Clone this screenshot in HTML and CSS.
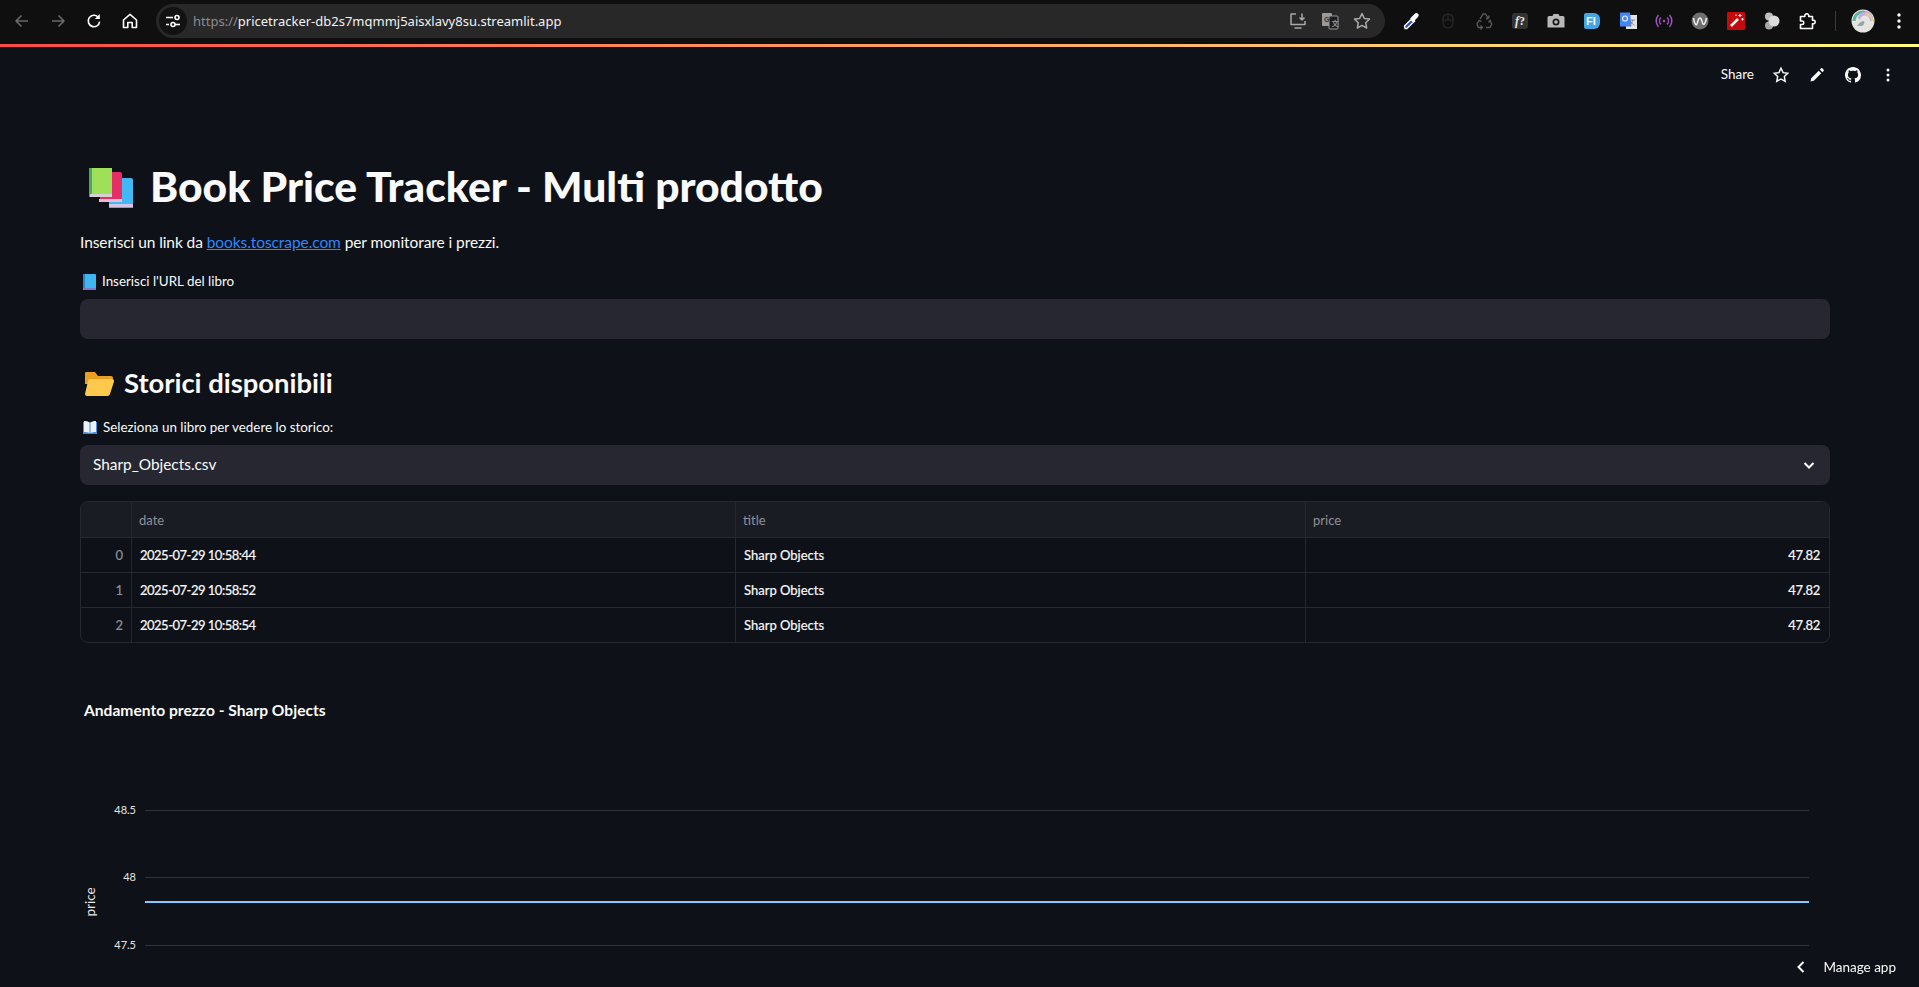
FILE: index.html
```html
<!DOCTYPE html>
<html lang="en">
<head>
    <meta charset="UTF-8">
    <meta name="viewport" content="width=device-width, initial-scale=1.0">
    <title>Book Price Tracker</title>
    <link rel="stylesheet" href="styles.css">
</head>
<body>

    <!-- browser chrome -->
    <div class="browser-bar">
        <div class="tb-slot"><svg width="20" height="20" viewBox="0 0 20 20" class="ic-dim"><path d="M16 10H4.500M9.500 4.500 4 10l5.500 5.500"/></svg></div>
        <div class="tb-slot"><svg width="20" height="20" viewBox="0 0 20 20" class="ic-dim"><path d="M4 10h11.500M10.500 4.500 16 10l-5.500 5.500"/></svg></div>
        <div class="tb-slot"><svg width="20" height="20" viewBox="0 0 20 20" class="ic-white"><path d="M15.600 10.600A5.700 5.700 0 1 1 14 6"/><path class="fill" d="M15.800 3v5h-5z"/></svg></div>
        <div class="tb-slot"><svg width="20" height="20" viewBox="0 0 20 20" class="ic-white"><path d="M3.500 9 10 3.300 16.500 9v7.500h-4.300v-5H7.800v5H3.500z"/></svg></div>

        <div class="omnibox">
            <div class="site-info">
                <svg width="16" height="16" viewBox="0 0 16 16" class="ic-white"><path d="M1 4.500h7M1 11.500h3"/><circle cx="12" cy="4.500" r="2"/><circle cx="8" cy="11.500" r="2"/><path d="M10 11.500h5"/></svg>
            </div>
            <div class="url"><span class="url-scheme">https://</span>pricetracker-db2s7mqmmj5aisxlavy8su.streamlit.app</div>
            <div class="omni-icons">
                <div class="omni-slot"><svg width="20" height="20" viewBox="0 0 20 20" class="ic-grey"><path d="M8 3H3v10.500h14V10M6.500 17h7M14 2.500v6.500M11.500 6.500 14 9l2.500-2.500"/></svg></div>
                <div class="omni-slot"><svg width="20" height="20" viewBox="0 0 20 20"><rect x="2" y="2" width="10" height="13" rx="1" fill="#9a9a9a"/><rect x="9" y="5" width="9" height="13" rx="1" fill="#1d1d1d" stroke="#9a9a9a"/><text x="4" y="11" class="mini-text dark">G</text><text x="11.500" y="15" class="mini-text grey">文</text></svg></div>
                <div class="omni-slot"><svg width="20" height="20" viewBox="0 0 20 20" class="ic-grey"><path d="m10 2.500 2.300 4.900 5.200.7-3.800 3.600 1 5.300-4.700-2.600L5.300 17l1-5.300L2.500 8.100l5.200-.7z"/></svg></div>
            </div>
        </div>

        <div class="toolbar">
            <div class="tb-slot"><svg width="20" height="20" viewBox="0 0 20 20"><path d="M3 17.500 2.500 15 9 8.500l2.500 2.500L5 17.500z" fill="#2a4fc0" stroke="#fff" stroke-width="1.300"/><path d="m9.500 6 3-3c1-1.200 2.500-1.200 3.500-.2s1 2.400-.2 3.400l-3 3 .7 1-1.300 1.300-4-4L9.500 6z" fill="#fff"/></svg></div>
            <div class="tb-slot"><svg width="20" height="20" viewBox="0 0 20 20" class="ic-faint"><rect x="5" y="3" width="10" height="14" rx="5"/><path d="M5 9h10M10 3v6"/></svg></div>
            <div class="tb-slot"><svg width="20" height="20" viewBox="0 0 20 20" class="ic-recycle"><path d="M6 8 9 3h2.500l2.500 4M12 8l2.500-1 .7-2.500M2.800 13 5 9.500l2.500.8M2.800 13l1.500 3.500H8M6.500 14.500l2 2-2 2M12 16.500h4l1.800-3.500-2-3.500M17 9l-1.500.8-.8 1.700"/></svg></div>
            <div class="tb-slot"><div class="ext-f"><em>f</em>?</div></div>
            <div class="tb-slot"><svg width="20" height="20" viewBox="0 0 20 20"><path d="M3 5h3.500l1-2h5l1 2H17a1.500 1.500 0 0 1 1.500 1.500v10H1.500V6.500A1.500 1.500 0 0 1 3 5z" fill="#b8b8b8"/><circle cx="10" cy="11" r="3.500" fill="#1a1a1a"/><circle cx="10" cy="11" r="1.800" fill="#b8b8b8"/></svg></div>
            <div class="tb-slot"><div class="ext-fi">F<span>I</span></div></div>
            <div class="tb-slot"><svg width="20" height="20" viewBox="0 0 20 20"><rect x="8" y="4" width="11" height="14" fill="#e3e3e3"/><path d="M2 1.500h10l1.500 14H2z" fill="#4285f4"/><circle cx="7" cy="7.500" r="2.500" fill="none" stroke="#e8f0fe" stroke-width="1.200"/><path d="M12 9h5M14.500 9c0 2-1 4-2.500 5M13 10.500c.8 2 2 3 3.500 3.500" fill="none" stroke="#8a8a8a"/></svg></div>
            <div class="tb-slot"><svg width="20" height="20" viewBox="0 0 20 20" class="ic-purple"><circle class="fill" cx="10" cy="10" r="1.300"/><path d="M7 6.500a5 5 0 0 0 0 7M13 6.500a5 5 0 0 1 0 7M4.500 4a9 9 0 0 0 0 12M15.500 4a9 9 0 0 1 0 12"/></svg></div>
            <div class="tb-slot"><svg width="20" height="20" viewBox="0 0 20 20"><circle cx="10" cy="10" r="8.500" fill="#6f6f6f"/><path d="M3.500 7c1 6 2.500 8 3.500 6s1-6 3-6 2 5 3 6 2.500-1 3.500-6" fill="none" stroke="#eee" stroke-width="1.500"/></svg></div>
            <div class="tb-slot"><svg width="20" height="20" viewBox="0 0 20 20"><rect x="1" y="1" width="18" height="18" rx="1" fill="#c30b0b"/><path d="m5 15 7-7" stroke="#fff" stroke-width="2.500"/><path d="M14 3v3M12.500 4.500h3M16.500 7v2.500M15.300 8.200h2.400M10 3.500v1.500" stroke="#fff"/></svg></div>
            <div class="tb-slot"><svg width="20" height="20" viewBox="0 0 20 20"><circle cx="7" cy="5.500" r="4" fill="#bdbdbd"/><circle cx="7" cy="14.500" r="4" fill="#a8a8a8"/><circle cx="12" cy="10" r="5.500" fill="#dcdcdc"/></svg></div>
            <div class="tb-slot"><svg width="20" height="20" viewBox="0 0 20 20" class="ic-white"><path d="M2.500 5.500h4.300c-.5-3.600 4.500-3.600 4 0h3.700v3.700c3.600-.5 3.600 4 0 3.500v4.800H2.500v-4h1.800c2 0 2-3.500 0-3.500H2.500z"/></svg></div>
            <div class="tb-sep"></div>
            <div class="tb-slot"><svg width="24" height="24" viewBox="0 0 24 24"><circle cx="12" cy="12" r="11.500" fill="#e4e4e0"/><path d="M1.500 12a10.500 10.500 0 0 1 21 0h-3a7.500 7.500 0 0 0-15 0z" fill="#56b8a0"/><path d="M7 9a7 7 0 0 1 15 2l-3 1a5 5 0 0 0-10-1z" fill="#c8a8e0"/><path d="M14 4a8 8 0 0 1 8.500 8l-2 0a7 7 0 0 0-6-6z" fill="#e8d08a"/><path d="M6 17c2-3 4-5 7-5 1 2 0 4-2 5z" fill="#9aa4ad"/></svg></div>
            <div class="tb-slot"><svg width="20" height="20" viewBox="0 0 20 20"><circle cx="10" cy="4" r="1.700" fill="#fff"/><circle cx="10" cy="10" r="1.700" fill="#fff"/><circle cx="10" cy="16" r="1.700" fill="#fff"/></svg></div>
        </div>
    </div>
    <div class="decoration"></div>

    <!-- streamlit toolbar -->
    <div class="app-bar">
        <span class="share">Share</span>
        <div class="app-slot"><svg width="18" height="18" viewBox="0 0 20 20" class="ic-white"><path d="m10 2.500 2.300 4.900 5.200.7-3.800 3.600 1 5.300-4.700-2.600L5.300 17l1-5.300L2.500 8.100l5.200-.7z"/></svg></div>
        <div class="app-slot"><svg width="16" height="16" viewBox="0 0 16 16"><path d="M1.500 14.500l.7-3.300 7.500-7.500 2.600 2.600-7.500 7.500zM10.800 2.600l1.200-1.200c.4-.4 1-.4 1.400 0l1.200 1.200c.4.400.4 1 0 1.400l-1.200 1.200z" fill="#fafafa"/></svg></div>
        <div class="app-slot"><svg width="16" height="16" viewBox="0 0 16 16"><path fill="#fafafa" d="M8 0C3.580 0 0 3.580 0 8c0 3.540 2.290 6.530 5.470 7.590.4.070.55-.17.55-.38 0-.19-.01-.82-.01-1.490-2.010.37-2.530-.49-2.690-.94-.09-.23-.48-.94-.82-1.130-.28-.15-.68-.52-.01-.53.63-.01 1.080.58 1.230.82.72 1.210 1.870.87 2.330.66.07-.52.28-.87.51-1.070-1.780-.2-3.640-.89-3.640-3.950 0-.87.31-1.590.82-2.150-.08-.2-.36-1.020.08-2.120 0 0 .67-.21 2.200.82.64-.18 1.320-.27 2-.27.68 0 1.360.09 2 .27 1.530-1.040 2.200-.82 2.200-.82.44 1.100.16 1.920.08 2.120.51.56.82 1.270.82 2.150 0 3.070-1.870 3.750-3.650 3.950.29.25.54.73.54 1.480 0 1.070-.01 1.930-.01 2.200 0 .21.15.46.55.38A8.013 8.013 0 0016 8c0-4.420-3.580-8-8-8z"/></svg></div>
        <div class="app-slot app-slot-last"><svg width="16" height="16" viewBox="0 0 16 16"><circle cx="8" cy="3" r="1.500" fill="#fafafa"/><circle cx="8" cy="8" r="1.500" fill="#fafafa"/><circle cx="8" cy="13" r="1.500" fill="#fafafa"/></svg></div>
    </div>

    <div class="main">
        <h1 class="page-title">
            <svg class="emoji-books" width="44" height="40" viewBox="0 0 44 40">
                <path d="M20 10h22a2 2 0 0 1 2 2v28H20z" fill="#42b8f5"/><rect x="20" y="36" width="24" height="3" fill="#d3c4e8"/>
                <path d="M11 4h20a2 2 0 0 1 2 2v28H11z" fill="#e52e66"/><rect x="10" y="31" width="23" height="3" fill="#e8bfd0"/>
                <path d="M2 0h21v27H0V2a2 2 0 0 1 2-2z" fill="#9fe05a"/><rect x="0" y="0" width="3" height="29" fill="#4fa858"/><rect x="1" y="26" width="22" height="3" fill="#d6d0d8"/>
            </svg>
            <span class="lift">Book Price Tracker - Multi prodotto</span>
        </h1>
        <p class="intro">Inserisci un link da <a href="#">books.toscrape.com</a> per monitorare i prezzi.</p>

        <label class="field-label">
            <svg class="emoji-small" width="13" height="16" viewBox="0 0 13 16"><path d="M1 0h11a1 1 0 0 1 1 1v15H0V1a1 1 0 0 1 1-1z" fill="#3fb6f0"/><rect y="0" width="2" height="16" fill="#2a82c8"/><rect y="14" width="13" height="2" fill="#7a78c8"/></svg>
            <span class="lift-small">Inserisci l'URL del libro</span>
        </label>
        <div class="text-input"></div>

        <h2 class="section-title">
            <svg class="emoji-folder" width="29" height="24" viewBox="0 0 29 24"><path d="M1 0h9l3 4h13a2 2 0 0 1 2 2v6H0V1a1 1 0 0 1 1-1z" fill="#e8a020"/><path d="M5 7h22a2 2 0 0 1 2 2.500L25 22a3 3 0 0 1-3 2H2a2 2 0 0 1-2-2l3-13a2 2 0 0 1 2-2z" fill="#ffc94d"/></svg>
            <span class="lift">Storici disponibili</span>
        </h2>

        <label class="field-label field-label-tight">
            <svg class="emoji-small" width="14" height="14" viewBox="0 0 14 14"><path d="M0 1h6.500l.5 1 .5-1H14v12H0z" fill="#3f8fe0"/><path d="M1 0c2 0 4 .2 5.500 1.500V12C5 11 3 11 1 11zM13 0c-2 0-4 .2-5.500 1.500V12C9 11 11 11 13 11z" fill="#eef1f6"/></svg>
            <span class="lift-small">Seleziona un libro per vedere lo storico:</span>
        </label>
        <div class="select-box">
            <span class="lift-small">Sharp_Objects.csv</span>
            <svg width="16" height="16" viewBox="0 0 16 16" class="chevron"><path d="M3.500 6 8 10.500 12.500 6"/></svg>
        </div>

        <div class="table-wrap">
            <table class="data-table">
                <colgroup>
                    <col class="col-index">
                    <col class="col-date">
                    <col class="col-title">
                    <col>
                </colgroup>
                <thead>
                    <tr><th></th><th>date</th><th>title</th><th>price</th></tr>
                </thead>
                <tbody>
                    <tr><td class="idx">0</td><td class="tight">2025-07-29 10:58:44</td><td>Sharp Objects</td><td class="num">47.82</td></tr>
                    <tr><td class="idx">1</td><td class="tight">2025-07-29 10:58:52</td><td>Sharp Objects</td><td class="num">47.82</td></tr>
                    <tr><td class="idx">2</td><td class="tight">2025-07-29 10:58:54</td><td>Sharp Objects</td><td class="num">47.82</td></tr>
                </tbody>
            </table>
        </div>

        <svg class="chart" width="1750" height="344" viewBox="0 0 1750 344">
            <text x="4" y="73" class="chart-title">Andamento prezzo - Sharp Objects</text>
            <line x1="65" x2="1729" y1="167.500" y2="167.500" class="grid"/>
            <line x1="65" x2="1729" y1="234.500" y2="234.500" class="grid"/>
            <line x1="65" x2="1729" y1="302.500" y2="302.500" class="grid"/>
            <text x="56" y="171" class="tick">48.5</text>
            <text x="56" y="238" class="tick">48</text>
            <text x="56" y="306" class="tick">47.5</text>
            <text class="axis-title" transform="translate(14.500 259) rotate(-90)">price</text>
            <line x1="65" x2="1729" y1="259" y2="259" class="series"/>
        </svg>
    </div>

    <div class="manage-app">
        <svg width="14" height="14" viewBox="0 0 14 14" class="chevron"><path d="M9.500 2 4.500 7l5 5"/></svg>
        <span>Manage app</span>
    </div>

</body>
</html>
```

FILE: styles.css
```css
* {
    margin: 0;
    padding: 0;
    box-sizing: border-box;
}

html, body {
    height: 100%;
    overflow: hidden;
}

body {
    font-family: 'Lato', 'Noto Sans', sans-serif;
    background-color: #0e1117;
    color: #fafafa;
}

/* Lato sits a little lower than the page's real font */
.lift {
    margin-bottom: 4px;
}

.lift-small {
    margin-bottom: 2px;
}

/* browser chrome */
.browser-bar {
    height: 44px;
    background-color: #0f0f0f;
    display: flex;
    align-items: center;
    padding: 0 0 2px 4px;
}

.tb-slot {
    width: 36px;
    height: 36px;
    flex: none;
    display: flex;
    align-items: center;
    justify-content: center;
}

.browser-bar svg path, .browser-bar svg circle, .browser-bar svg rect {
    stroke-linejoin: round;
}

.ic-dim path {
    fill: none;
    stroke: #6a6a6a;
    stroke-width: 1.6;
}

.ic-white path, .ic-white circle {
    fill: none;
    stroke: #fff;
    stroke-width: 1.6;
}

.ic-white .fill {
    fill: #fff;
    stroke: none;
}

.ic-grey path {
    fill: none;
    stroke: #a8a8a8;
    stroke-width: 1.5;
}

.ic-faint rect, .ic-faint path {
    fill: none;
    stroke: #2b2b2b;
    stroke-width: 1.2;
}

.ic-recycle path {
    fill: none;
    stroke: #5a5a5a;
    stroke-width: 1.4;
}

.ic-purple path {
    fill: none;
    stroke: #a14fc4;
    stroke-width: 1.5;
}

.ic-purple .fill {
    fill: #a14fc4;
}

.omnibox {
    width: 1229px;
    height: 34px;
    margin-left: 8px;
    background-color: #282828;
    border-radius: 17px;
    display: flex;
    align-items: center;
    padding-left: 3px;
    flex: none;
}

.site-info {
    width: 28px;
    height: 28px;
    border-radius: 50%;
    background-color: #121212;
    display: flex;
    align-items: center;
    justify-content: center;
}

.url {
    margin-left: 6px;
    font-family: 'Noto Sans', sans-serif;
    font-size: 13px;
    color: #f2f2f2;
    white-space: nowrap;
}

.url-scheme {
    color: #8c8c8c;
}

.omni-icons {
    margin-left: auto;
    margin-right: 7px;
    display: flex;
}

.omni-slot {
    width: 32px;
    height: 28px;
    display: flex;
    align-items: center;
    justify-content: center;
}

.mini-text {
    font-family: 'Liberation Sans', sans-serif;
    font-size: 7px;
    font-weight: bold;
}

.mini-text.dark {
    fill: #333;
}

.mini-text.grey {
    fill: #9a9a9a;
    font-family: 'Noto Sans CJK SC', sans-serif;
}

.toolbar {
    margin-left: 9px;
    display: flex;
    align-items: center;
}

.tb-sep {
    width: 1px;
    height: 20px;
    margin: 0 9px;
    background-color: #3a3a3a;
}

.ext-f {
    width: 16px;
    height: 16px;
    border-radius: 3px;
    background-color: #333;
    color: #e8e8e8;
    font-family: 'Liberation Serif', serif;
    font-size: 12px;
    font-weight: bold;
    line-height: 16px;
    text-align: center;
}

.ext-fi {
    width: 16px;
    height: 16px;
    border-radius: 2px 6px 6px 2px;
    background-color: #42a5e8;
    color: #fff;
    font-family: 'Liberation Sans', sans-serif;
    font-size: 11px;
    font-weight: bold;
    line-height: 16px;
    padding-left: 2px;
}

.decoration {
    height: 3px;
    background-image: linear-gradient(90deg, #ff4b4b, #fffd80);
}

/* streamlit toolbar */
.app-bar {
    height: 56px;
    display: flex;
    align-items: center;
    justify-content: flex-end;
    padding-right: 14px;
}

.share {
    font-size: 13.5px;
    margin-right: 9px;
    margin-bottom: 2px;
}

.app-slot {
    width: 36px;
    height: 32px;
    display: flex;
    align-items: center;
    justify-content: center;
}

.app-slot-last {
    width: 34px;
}

/* page content */
.main {
    padding: 53px 89px 0 80px;
}

.page-title {
    height: 64px;
    display: flex;
    align-items: center;
    font-size: 42.6px;
    font-weight: 900;
    line-height: 64px;
    padding-left: 9px;
}

.emoji-books {
    margin-right: 17px;
}

.intro {
    margin-top: 10px;
    padding-bottom: 1px;
    font-size: 15.5px;
    letter-spacing: -0.08px;
    line-height: 24px;
}

.intro a {
    color: #2f86ff;
}

.field-label {
    margin-top: 17px;
    height: 20px;
    display: flex;
    align-items: center;
    font-size: 13.4px;
    padding-left: 3px;
}

.field-label-tight {
    margin-top: 14px;
}

.emoji-small {
    margin-right: 6px;
}

.text-input {
    margin-top: 7px;
    height: 40px;
    background-color: #262730;
    border-radius: 8px;
}

.section-title {
    margin-top: 25px;
    height: 40px;
    display: flex;
    align-items: center;
    font-size: 27.4px;
    font-weight: 700;
    padding-left: 5px;
}

.emoji-folder {
    margin-right: 10px;
}

.select-box {
    margin-top: 7px;
    height: 40px;
    background-color: #262730;
    border-radius: 8px;
    display: flex;
    align-items: center;
    justify-content: space-between;
    padding: 0 13px;
    font-size: 15.4px;
}

.chevron path {
    fill: none;
    stroke: #fafafa;
    stroke-width: 2;
}

.table-wrap {
    margin-top: 16px;
    border: 1px solid #25282e;
    border-radius: 8px;
    overflow: hidden;
}

.data-table {
    width: 100%;
    table-layout: fixed;
    border-collapse: separate;
    border-spacing: 0;
    font-size: 13px;
}

.col-index {
    width: 51px;
}

.col-date {
    width: 604px;
}

.col-title {
    width: 570px;
}

.data-table th {
    height: 36px;
    background-color: #1a1c24;
    color: #8f9198;
    font-weight: 400;
    text-align: left;
    padding: 0 7px;
    border-bottom: 1px solid #25282e;
    border-right: 1px solid #25282e;
}

.data-table td {
    height: 35px;
    padding: 0 8px;
    border-bottom: 1px solid #25282e;
    border-right: 1px solid #25282e;
    -webkit-text-stroke: 0.2px;
}

.data-table tr:last-child td {
    height: 34px;
    border-bottom: none;
}

.data-table th:last-child, .data-table td:last-child {
    border-right: none;
}

.data-table .tight {
    letter-spacing: -0.5px;
}

.data-table .idx {
    color: #8f9198;
    text-align: right;
}

.data-table .num {
    text-align: right;
    letter-spacing: -0.3px;
    padding-right: 9px;
}

/* chart */
.chart {
    display: block;
}

.chart-title {
    font-size: 15.6px;
    font-weight: 700;
    fill: #fafafa;
}

.grid {
    stroke: #31333a;
    stroke-width: 1;
}

.series {
    stroke: #83c9ff;
    stroke-width: 2;
}

.tick {
    font-size: 11px;
    fill: #e6e6e6;
    text-anchor: end;
}

.axis-title {
    font-size: 13.5px;
    fill: #e6e6e6;
    text-anchor: middle;
}

/* floats over the chart */
.manage-app {
    position: fixed;
    right: 23px;
    bottom: 12px;
    display: flex;
    align-items: center;
    gap: 15px;
    font-size: 13.5px;
}
```
